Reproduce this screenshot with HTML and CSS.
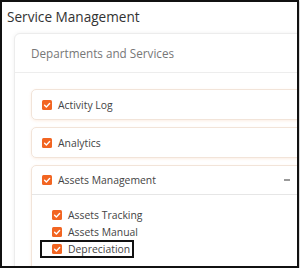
FILE: index.html
```html
<!DOCTYPE html>
<html>
<head>
<meta charset="utf-8">
<link rel="stylesheet" href="styles.css">
</head>
<body>
<div class="frame">
  <h1 class="title">Service Management</h1>
  <div class="card">
    <div class="card-head">Departments and Services</div>
    <div class="card-body">
      <div class="item">
        <div class="item-head"><span class="cb"><svg viewBox="0 0 10 10"><polyline points="2.6,5.2 4.4,6.9 7.6,3.6"/></svg></span>Activity Log</div>
      </div>
      <div class="item">
        <div class="item-head"><span class="cb"><svg viewBox="0 0 10 10"><polyline points="2.6,5.2 4.4,6.9 7.6,3.6"/></svg></span>Analytics</div>
      </div>
      <div class="item open">
        <div class="item-head"><span class="cb"><svg viewBox="0 0 10 10"><polyline points="2.6,5.2 4.4,6.9 7.6,3.6"/></svg></span>Assets Management<span class="minus"></span></div>
        <div class="sub">
          <div class="sub-row"><span class="cb"><svg viewBox="0 0 10 10"><polyline points="2.6,5.2 4.4,6.9 7.6,3.6"/></svg></span>Assets Tracking</div>
          <div class="sub-row"><span class="cb"><svg viewBox="0 0 10 10"><polyline points="2.6,5.2 4.4,6.9 7.6,3.6"/></svg></span>Assets Manual</div>
          <div class="sub-row hl"><span class="cb"><svg viewBox="0 0 10 10"><polyline points="2.6,5.2 4.4,6.9 7.6,3.6"/></svg></span>Depreciation</div>
        </div>
      </div>
    </div>
  </div>
</div>
</body>
</html>
```
FILE: styles.css
```css
html, body {
  margin: 0;
  padding: 0;
  background: #fff;
}
body {
  font-family: "Open Sans", "Noto Sans", sans-serif;
  color: #444;
}
.frame {
  width: 299px;
  height: 268px;
  box-sizing: border-box;
  border: 2px solid #111;
  overflow: hidden;
  box-shadow: 0 1px 2px #888;
}
.title {
  margin: 0;
  padding: 6px 0 0 5px;
  font-size: 13.6px;
  line-height: 18px;
  font-weight: 400;
  color: #333;
}
.card {
  margin: 7px 0 0 12px;
  width: 400px;
  border: 1px solid #ececec;
  border-radius: 6px;
  box-shadow: 0 0 4px rgba(0, 0, 0, 0.06);
  background: #fff;
}
.card-head {
  height: 38px;
  display: flex;
  align-items: center;
  padding-left: 16px;
  font-size: 11.7px;
  color: #777;
  border-bottom: 1px solid #ededed;
}
.card-body {
  padding: 16px 0 0 16px;
}
.item {
  width: 270px;
  border: 1px solid #f2e4d9;
  border-radius: 5px;
  box-shadow: 0 1px 3px rgba(240, 120, 40, 0.12);
  margin-bottom: 7px;
}
.item-head {
  height: 29px;
  display: flex;
  align-items: center;
  padding-left: 10px;
  font-size: 10.4px;
  color: #444;
}
.open .item-head {
  height: 28px;
  border-bottom: 1px solid #e6e6e6;
}
.cb {
  width: 10px;
  height: 10px;
  border-radius: 1.5px;
  background: #f26522;
  margin-right: 6px;
  flex: none;
  display: flex;
}
.cb svg {
  width: 10px;
  height: 10px;
  fill: none;
  stroke: #fff;
  stroke-width: 1.4;
  stroke-linecap: round;
  stroke-linejoin: round;
}
.minus {
  margin-left: auto;
  margin-right: 12px;
  width: 6px;
  height: 2px;
  background: #9a9a9a;
}
.sub {
  padding: 11px 0 20px 20px;
}
.sub-row {
  height: 17px;
  display: flex;
  align-items: center;
  font-size: 10.4px;
  color: #444;
}
.sub-row.hl {
  box-sizing: border-box;
  height: 18px;
  width: max-content;
  border: 2px solid #111;
  margin-left: -12px;
  padding: 0 2px 0 10px;
}
```
